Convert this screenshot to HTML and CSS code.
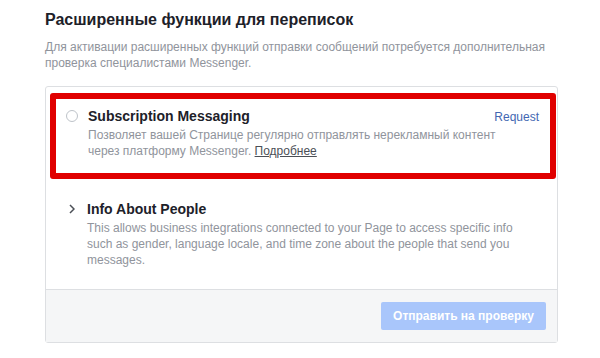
FILE: index.html
```html
<!DOCTYPE html>
<html lang="ru">
<head>
<meta charset="utf-8">
<link rel="stylesheet" href="styles.css">
</head>
<body>
<div class="page">
  <h1 class="title">Расширенные функции для переписок</h1>
  <p class="subtitle">Для активации расширенных функций отправки сообщений потребуется дополнительная проверка специалистами Messenger.</p>
  <div class="card">
    <div class="row row-first">
      <span class="radio"></span>
      <div class="body">
        <div class="head">
          <span class="name">Subscription Messaging</span>
          <a class="request">Request</a>
        </div>
        <p class="desc">Позволяет вашей Странице регулярно отправлять нерекламный контент через платформу Messenger. <a class="more">Подробнее</a></p>
      </div>
      <div class="highlight"></div>
    </div>
    <div class="row row-second">
      <svg class="chevron" width="6" height="10" viewBox="0 0 6 10"><path d="M1 1 L5 5 L1 9" fill="none" stroke="#4b4f56" stroke-width="1.5"/></svg>
      <div class="body">
        <div class="head">
          <span class="name">Info About People</span>
        </div>
        <p class="desc">This allows business integrations connected to your Page to access specific info such as gender, language locale, and time zone about the people that send you messages.</p>
      </div>
    </div>
    <div class="footer">
      <button class="submit">Отправить на проверку</button>
    </div>
  </div>
</div>
</body>
</html>
```
FILE: styles.css
```css
html, body {
  margin: 0;
  padding: 0;
  background: #fff;
}
body {
  font-family: "Liberation Sans", Arial, Helvetica, sans-serif;
  width: 600px;
  height: 358px;
  overflow: hidden;
}
.page {
  padding: 10px 0 0 45px;
  width: 513px;
}
.title {
  margin: 0;
  font-size: 16px;
  line-height: 20px;
  font-weight: bold;
  color: #1d2129;
}
.subtitle {
  margin: 9px 0 0 0;
  font-size: 12px;
  line-height: 16px;
  color: #90949c;
}
.card {
  margin-top: 15px;
  border: 1px solid #dddfe2;
  border-radius: 3px;
  background: #fff;
  width: 511px;
}
.row {
  position: relative;
  display: flex;
  padding: 20px 18px 20px 20px;
}
.row-second {
  padding-top: 21px;
  padding-bottom: 21px;
}
.radio {
  flex: none;
  width: 10px;
  height: 10px;
  border: 1px solid #bec3c9;
  border-radius: 50%;
  margin-top: 3px;
  margin-right: 10px;
}
.chevron {
  flex: none;
  margin: 4px 12px 0 3px;
}
.body {
  flex: 1;
}
.head {
  display: flex;
  justify-content: space-between;
  align-items: baseline;
}
.name {
  font-size: 14px;
  line-height: 18px;
  font-weight: bold;
  color: #1d2129;
}
.request {
  font-size: 12px;
  color: #4267b2;
}
.desc {
  margin: 2px 0 0 0;
  width: 432px;
  font-size: 12px;
  line-height: 16px;
  color: #90949c;
}
.more {
  color: #4b4f56;
  text-decoration: underline;
}
.highlight {
  position: absolute;
  left: 4px;
  top: 6px;
  width: 494px;
  height: 74px;
  border: 6px solid #e00000;
  border-radius: 3px;
  pointer-events: none;
}
.footer {
  display: flex;
  justify-content: flex-end;
  border-top: 1px solid #dddfe2;
  background: #f5f6f7;
  padding: 12px 11px 12px 0;
}
.submit {
  height: 28px;
  width: 165px;
  border: none;
  border-radius: 2px;
  background: #a9c6fb;
  color: #fff;
  font-family: "Liberation Sans", Arial, sans-serif;
  font-size: 12px;
  font-weight: bold;
  padding: 0;
}
```
